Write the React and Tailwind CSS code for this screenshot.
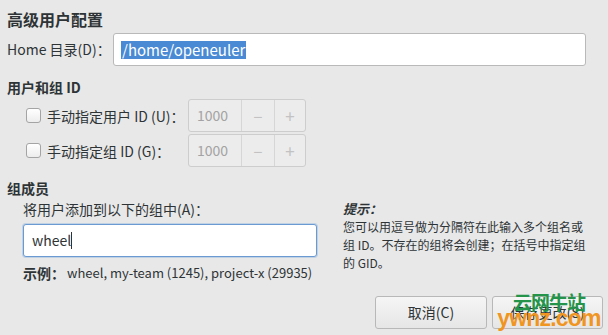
import React from 'react';

const font = { fontFamily: '"Noto Sans CJK SC", "Noto Sans", sans-serif' };

function SpinRow({ label }) {
  return (
    <div className="flex items-center h-[33px]">
      <div className="w-[19px] ml-[19px]">
        <div className="w-[15px] h-[15px] rounded-[3px] border border-[#a4a4a4] bg-gradient-to-b from-white to-[#ededed]" />
      </div>
      <div className="w-[143px] pl-[2px] text-[14px] leading-[20px]">{label}</div>
      <div className="flex h-[33px] w-[118px] rounded-[3px] border border-[#cdcdcd] bg-[#ececec] text-[#a3a3a3]">
        <div className="w-[52px] flex items-center pl-[8px] text-[14px]">1000</div>
        <div className="w-[33px] border-l border-[#d6d6d6] flex items-center justify-center text-[16px] text-[#c2c2c2]">−</div>
        <div className="flex-1 border-l border-[#d6d6d6] flex items-center justify-center text-[17px] text-[#c2c2c2]">+</div>
      </div>
    </div>
  );
}

export default function App() {
  return (
    <div
      className="relative w-[608px] h-[335px] overflow-hidden bg-[#e8e8e8] text-[#2e3436] pl-[7px] pt-[9px]"
      style={font}
    >
      {/* 标题 */}
      <div className="text-[16px] leading-[20px] font-bold">高级用户配置</div>

      {/* Home 目录 */}
      <div className="flex items-center mt-[4px] h-[33px]">
        <div className="w-[106px] text-[14px]">Home 目录(D)：</div>
        <div className="w-[473px] h-[33px] bg-white border border-[#b9b9b9] rounded-[3px] flex items-center pl-[7px]">
          <span className="bg-[#4a8ad4] text-white text-[15px] leading-[18px] px-[1px]">/home/openeuler</span>
        </div>
      </div>

      {/* 用户和组 ID */}
      <div className="mt-[11px] text-[14px] leading-[20px] font-bold">用户和组 ID</div>
      <div className="mt-[2px] flex flex-col gap-[2px]">
        <SpinRow label="手动指定用户 ID (U)：" />
        <SpinRow label="手动指定组 ID (G)：" />
      </div>

      {/* 组成员 */}
      <div className="mt-[11px] text-[14px] leading-[20px] font-bold">组成员</div>
      <div className="flex mt-[2px]">
        <div className="w-[294px] ml-[16px]">
          <div className="text-[14px] leading-[18px]">将用户添加到以下的组中(A)：</div>
          <div className="mt-[6px] h-[33px] bg-white border border-[#6b9ad3] rounded-[3px] shadow-[0_0_0_1px_rgba(74,144,217,0.25)] flex items-center pl-[8px] text-[14px]">
            wheel<span className="inline-block w-px h-[17px] bg-[#2e3436]" />
          </div>
          <div className="mt-[7px] flex text-[13px] leading-[18px]">
            <span className="font-bold w-[44px] text-[14px]">示例：</span>
            <span>wheel, my-team (1245), project-x (29935)</span>
          </div>
        </div>
        <div className="ml-[26px] w-[248px] text-[12px] leading-[18px]">
          <div className="font-bold italic text-[13px]">提示：</div>
          <div>您可以用逗号做为分隔符在此输入多个组名或组 ID。不存在的组将会创建；在括号中指定组的 GID。</div>
        </div>
      </div>

      {/* 按钮 */}
      <div className="flex justify-end gap-[5px] mt-[14px] pr-[5px]">
        <button className="w-[112px] h-[33px] rounded-[3px] border border-[#b8b8b8] bg-gradient-to-b from-[#f5f5f5] to-[#e6e6e6] text-[14px] text-[#2e3436]">
          取消(C)
        </button>
        <button className="w-[111px] h-[33px] rounded-[3px] border border-[#b8b8b8] bg-gradient-to-b from-[#f5f5f5] to-[#e6e6e6] text-[14px] text-[#2e3436]">
          保存更改(S)
        </button>
      </div>

      {/* 水印 */}
      <div className="absolute left-[506px] top-[292px] w-[86px] flex flex-col items-center leading-none pointer-events-none">
        <span className="text-[19px] font-bold text-[#23944a] tracking-[-1px]">云网牛站</span>
        <span
          className="text-[23px] font-bold text-[#f0951f] tracking-[-0.8px] -mt-[4px]"
          style={{ fontFamily: '"Liberation Sans", sans-serif' }}
        >
          ywnz.com
        </span>
      </div>
    </div>
  );
}
